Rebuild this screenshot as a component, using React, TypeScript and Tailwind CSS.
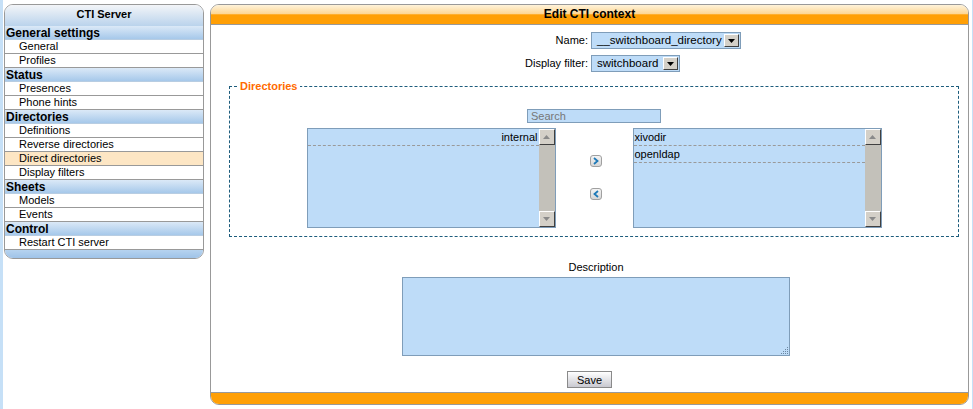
import React from 'react';

const menu = [
  { title: 'General settings', items: ['General', 'Profiles'] },
  { title: 'Status', items: ['Presences', 'Phone hints'] },
  { title: 'Directories', items: ['Definitions', 'Reverse directories', 'Direct directories', 'Display filters'] },
  { title: 'Sheets', items: ['Models', 'Events'] },
  { title: 'Control', items: ['Restart CTI server'] },
];

const ScrollButton = ({ up }: { up?: boolean }) => (
  <div className="w-[16px] h-[16px] bg-[#d4d0c8] border-t border-l border-t-white border-l-white border-b border-r border-b-[#404040] border-r-[#404040] flex items-center justify-center">
    <svg width="7" height="4" viewBox="0 0 7 4">
      {up ? <path d="M0 4 L3.5 0 L7 4 Z" fill="#8a8a8a" /> : <path d="M0 0 L3.5 4 L7 0 Z" fill="#8a8a8a" />}
    </svg>
  </div>
);

const Scrollbar = () => (
  <div className="w-[16px] h-full bg-[#c3c1ba] flex flex-col justify-between">
    <ScrollButton up />
    <ScrollButton />
  </div>
);

const ListBox = ({ items, right }: { items: string[]; right?: boolean }) => (
  <div className="w-[249px] h-[100px] border border-[#7f9db9] bg-[#bedcf8] flex">
    <div className="flex-1">
      {items.map((it) => (
        <div key={it} className={`h-[17px] leading-[16px] px-[1px] text-[11px] text-black border-b border-dashed border-[#9a9a9a] ${right ? 'text-right' : ''}`}>
          {it}
        </div>
      ))}
    </div>
    <Scrollbar />
  </div>
);

const MoveButton = ({ dir }: { dir: 'right' | 'left' }) => (
  <div className="w-[12px] h-[12px] rounded-[3px] border border-[#a0a0a0] bg-gradient-to-b from-[#f4f4f4] to-[#d6d6d6] flex items-center justify-center">
    <svg width="6" height="8" viewBox="0 0 6 8">
      {dir === 'right' ? (
        <path d="M1 1 L4.5 4 L1 7" stroke="#1f7ab8" strokeWidth="1.8" fill="none" />
      ) : (
        <path d="M5 1 L1.5 4 L5 7" stroke="#1f7ab8" strokeWidth="1.8" fill="none" />
      )}
    </svg>
  </div>
);

const FakeSelect = ({ value, width }: { value: string; width: string }) => (
  <div className={`${width} h-[17px] border border-[#7f9db9] bg-[#bedcf8] flex items-center`}>
    <span className="flex-1 pl-[5px] text-[11.5px] leading-[15px] text-black whitespace-nowrap">{value}</span>
    <div className="w-[15px] h-[13px] mr-[1px] bg-[#d4d0c8] border-t border-l border-t-white border-l-white border-b border-r border-b-[#404040] border-r-[#404040] flex items-center justify-center">
      <svg width="7" height="4" viewBox="0 0 7 4">
        <path d="M0 0 L3.5 4 L7 0 Z" fill="#000" />
      </svg>
    </div>
  </div>
);

export default function App() {
  return (
    <div className="w-[973px] h-[409px] bg-[#c6e0f7] flex font-['Liberation_Sans',Arial,sans-serif] text-black overflow-hidden">
      <div className="ml-[3px] w-[969px] h-full bg-white flex items-start">
        {/* Side menu */}
        <div className="ml-[1px] mt-[4px] w-[200px] border border-[#999] rounded-[9px] overflow-hidden">
          <div className="h-[21px] bg-gradient-to-b from-[#f3f5f8] to-[#bad3ec] text-center text-[11px] font-bold leading-[19px]">
            CTI Server
          </div>
          {menu.map((sec) => (
            <div key={sec.title}>
              <div className="h-[14px] bg-gradient-to-b from-[#dbe9f7] to-[#a6c8ea] border-b border-[#b8cde2] pl-[1px] text-[12px] font-bold leading-[14px]">
                {sec.title}
              </div>
              {sec.items.map((it) => (
                <div
                  key={it}
                  className={`h-[14px] border-b border-[#999] pl-[14px] text-[11px] leading-[13px] ${it === 'Direct directories' ? 'bg-[#fde6c4]' : 'bg-white'}`}
                >
                  {it}
                </div>
              ))}
            </div>
          ))}
          <div className="h-[8px] bg-gradient-to-b from-[#b6d3ef] to-[#9fc3e8]" />
        </div>

        {/* Main panel */}
        <div className="ml-[6px] mt-[4px] w-[759px] h-[401px] border border-[#999] rounded-[9px] overflow-hidden flex flex-col">
          <div className="h-[20px] shrink-0 border-b border-[#999] bg-[linear-gradient(to_bottom,#fff3da_0%,#fdd796_45%,#ff9f05_52%,#ff9f05_100%)] text-center text-[12px] font-bold leading-[18px]">
            Edit CTI context
          </div>

          <div className="flex-1 flex flex-col">
            <div className="pt-[7px] grid grid-cols-[1fr_1fr] gap-x-[3px] gap-y-[6px] items-center">
              <div className="text-right text-[11px]">Name:</div>
              <FakeSelect value="__switchboard_directory" width="w-[150px]" />
              <div className="text-right text-[11px]">Display filter:</div>
              <FakeSelect value="switchboard" width="w-[89px]" />
            </div>

            <fieldset className="ml-[18px] mr-[9px] mt-[8px] border border-dashed border-[#1d5c7c] pb-[8px]">
              <legend className="ml-[7px] px-[3px] text-[11px] font-bold leading-[13px] text-[#ff6a00]">Directories</legend>
              <div className="flex flex-col items-center pt-[16px]">
                <input
                  placeholder="Search"
                  className="w-[134px] h-[14px] border border-[#7f9db9] bg-[#bedcf8] px-[3px] text-[11px] leading-[12px] placeholder:text-[#777] outline-none"
                />
                <div className="mt-[5px] flex items-center">
                  <ListBox items={['internal']} right />
                  <div className="w-[77px] flex flex-col items-center gap-[21px] pl-[3px] pb-[1px]">
                    <MoveButton dir="right" />
                    <MoveButton dir="left" />
                  </div>
                  <ListBox items={['xivodir', 'openldap']} />
                </div>
              </div>
            </fieldset>

            <div className="mt-[24px] flex flex-col items-center">
              <div className="ml-[13px] text-[11px] leading-[13px]">Description</div>
              <div className="relative ml-[13px] mt-[3px] w-[388px] h-[79px] border border-[#7f9db9] bg-[#bedcf8]">
                <svg className="absolute right-[1px] bottom-[1px]" width="7" height="7" viewBox="0 0 7 7">
                  <g fill="#6b86a0">
                    <rect x="6" y="0" width="1" height="1" />
                    <rect x="4" y="2" width="1" height="1" />
                    <rect x="6" y="2" width="1" height="1" />
                    <rect x="2" y="4" width="1" height="1" />
                    <rect x="4" y="4" width="1" height="1" />
                    <rect x="6" y="4" width="1" height="1" />
                    <rect x="0" y="6" width="1" height="1" />
                    <rect x="2" y="6" width="1" height="1" />
                    <rect x="4" y="6" width="1" height="1" />
                    <rect x="6" y="6" width="1" height="1" />
                  </g>
                </svg>
              </div>
              <button className="mt-[15px] w-[45px] h-[17px] border border-[#8a8a8a] bg-gradient-to-b from-[#ffffff] to-[#c9c9d0] text-[11px] leading-[14px]">
                Save
              </button>
            </div>
          </div>

          <div className="h-[12px] shrink-0 border-t border-[#999] bg-[#ff9f05]" />
        </div>
      </div>
    </div>
  );
}
